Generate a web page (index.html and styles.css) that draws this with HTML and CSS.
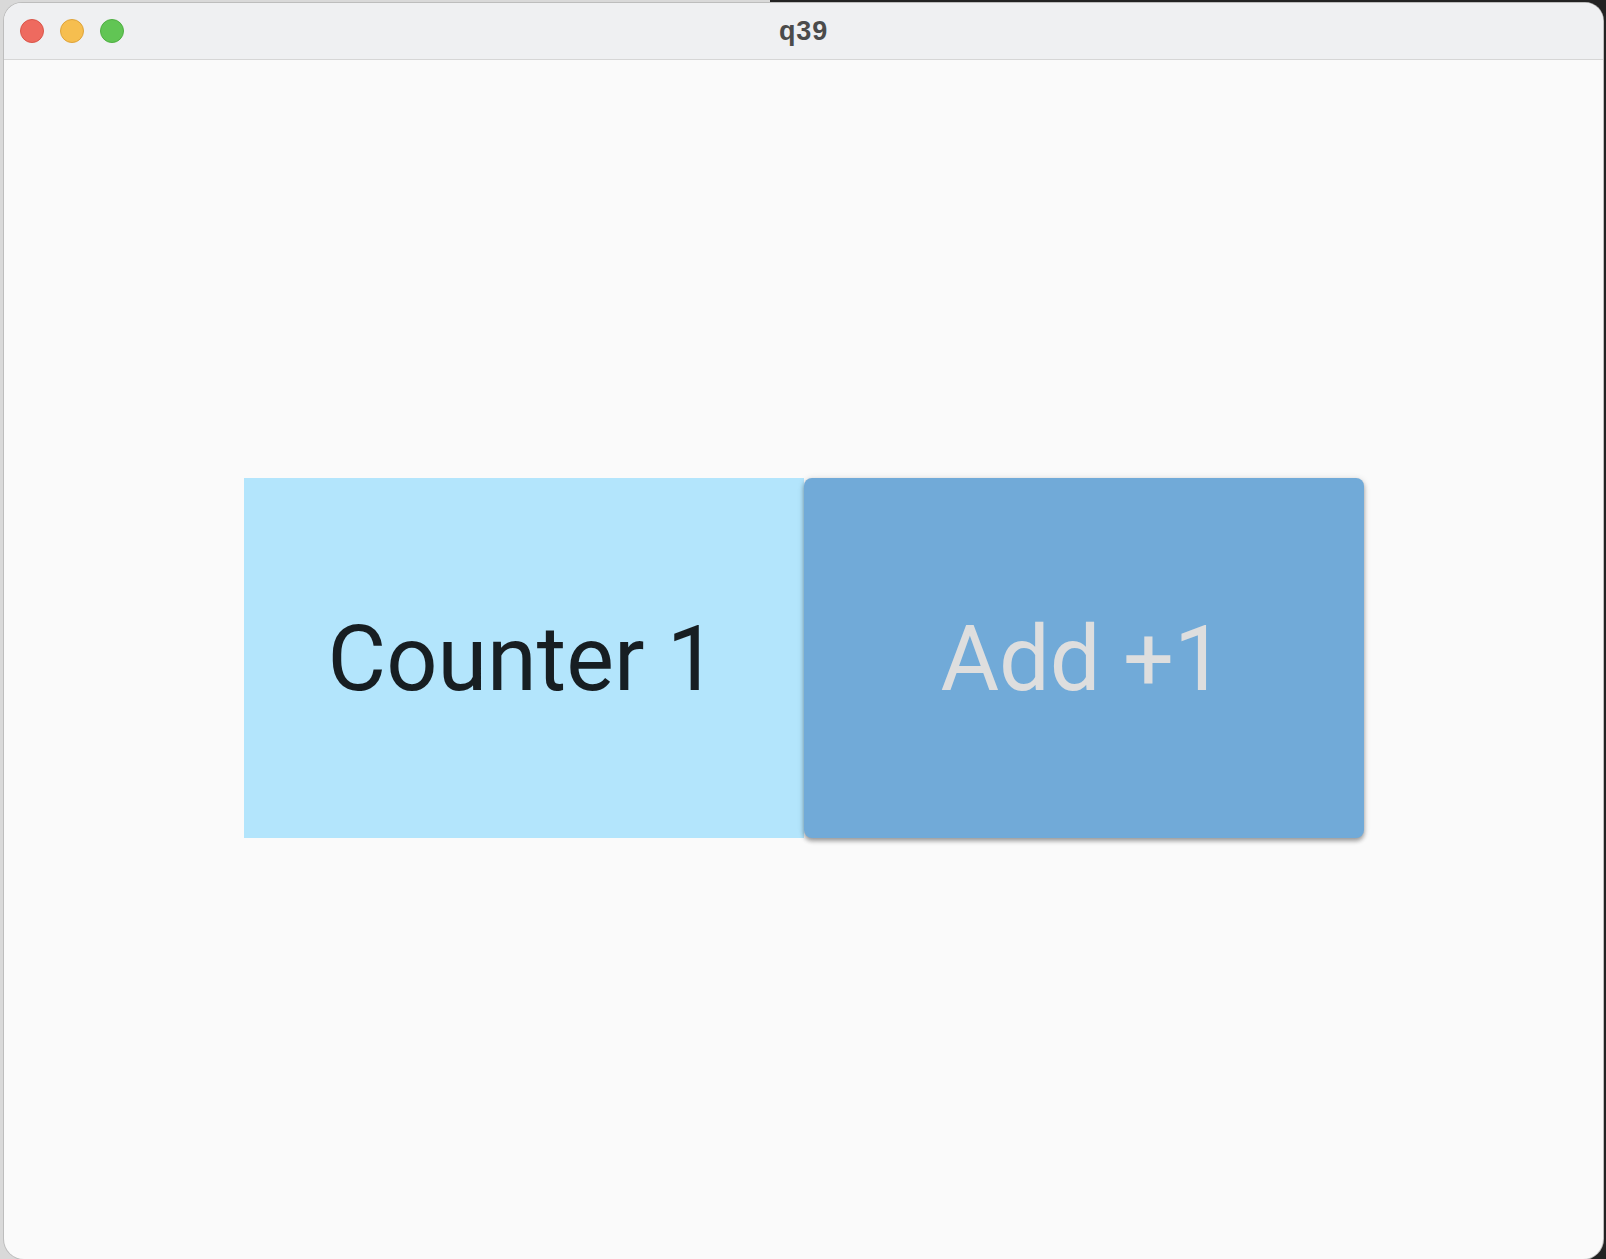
FILE: index.html
```html
<!DOCTYPE html>
<html>
<head>
<meta charset="utf-8">
<link rel="stylesheet" href="styles.css">
</head>
<body>
<div class="window">
  <div class="titlebar">
    <div class="lights">
      <span class="light red"></span>
      <span class="light yellow"></span>
      <span class="light green"></span>
    </div>
    <div class="title">q39</div>
  </div>
  <div class="content">
    <div class="row">
      <div class="counter"><span>Counter 1</span></div>
      <button class="add"><span>Add +1</span></button>
    </div>
  </div>
</div>
</body>
</html>
```
FILE: styles.css
```css
html, body {
  margin: 0;
  padding: 0;
  width: 1606px;
  height: 1259px;
  overflow: hidden;
}
body {
  background: linear-gradient(to right, #d9d9d9 0, #d9d9d9 770px, #232323 770px, #232323 100%);
  font-family: Roboto, "Noto Sans", sans-serif;
  padding: 3px 3px 0 4px;
  box-sizing: border-box;
}
.window {
  width: 1599px;
  height: 1256px;
  background: #fafafa;
  border-radius: 18px 18px 20px 20px;
  overflow: hidden;
  display: flex;
  flex-direction: column;
  box-shadow: 0 0 0 1px #bdbdbd;
}
.titlebar {
  height: 56px;
  flex: none;
  background: #eff0f2;
  border-bottom: 1px solid #d6d6d6;
  position: relative;
  display: flex;
  align-items: center;
  justify-content: center;
}
.lights {
  position: absolute;
  left: 16px;
  top: 16px;
  display: flex;
  gap: 16px;
}
.light {
  width: 24px;
  height: 24px;
  border-radius: 50%;
  box-sizing: border-box;
}
.red { background: #ee6a5f; border: 1px solid #d95549; }
.yellow { background: #f6be4f; border: 1px solid #dea33a; }
.green { background: #61c554; border: 1px solid #4fae42; }
.title {
  font-family: "Liberation Sans", Arial, sans-serif;
  font-weight: bold;
  font-size: 27px;
  letter-spacing: 0.8px;
  color: #4b4b4b;
}
.content {
  flex: 1;
  display: flex;
  align-items: center;
  justify-content: center;
  padding-bottom: 3px;
}
.row {
  display: flex;
}
.counter {
  width: 560px;
  height: 360px;
  background: #b3e5fc;
  display: flex;
  align-items: center;
  justify-content: center;
  color: #171e22;
  font-size: 90px;
}
.add {
  width: 560px;
  height: 360px;
  border: none;
  margin: 0;
  padding: 0;
  background: #71aad8;
  border-radius: 8px;
  box-shadow: 0 3px 4px rgba(0,0,0,0.32), 0 1px 7px rgba(0,0,0,0.14);
  display: flex;
  align-items: center;
  justify-content: center;
  color: #dedede;
  font-family: Roboto, "Noto Sans", sans-serif;
  font-size: 90px;
}
.counter span, .add span {
  margin-right: 2px;
  margin-top: 2px;
}
```
